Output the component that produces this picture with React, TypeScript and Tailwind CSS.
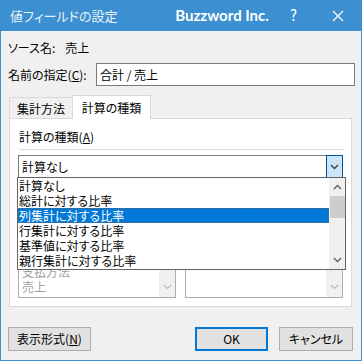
import React from 'react';

const FONT = { fontFamily: '"Noto Sans CJK JP", "Noto Sans", sans-serif', fontFeatureSettings: '"palt"' };

function ChevronDown({ color = '#606060' }: { color?: string }) {
  return (
    <svg width="9" height="6" viewBox="0 0 9 6">
      <path d="M1 1 L4.5 4.5 L8 1" fill="none" stroke={color} strokeWidth="1.4" />
    </svg>
  );
}

function ChevronUp({ color = '#606060' }: { color?: string }) {
  return (
    <svg width="9" height="6" viewBox="0 0 9 6">
      <path d="M1 5 L4.5 1.5 L8 5" fill="none" stroke={color} strokeWidth="1.4" />
    </svg>
  );
}

function Cursor() {
  return (
    <svg width="13" height="21" viewBox="0 0 13 21" className="absolute left-[221px] top-[218px]">
      <path d="M0.5 0.5 L0.5 16.5 L4.3 12.8 L6.8 19 L9.2 18 L6.8 12 L12 12 Z" fill="#fff" stroke="#000" strokeWidth="1" strokeLinejoin="round" />
    </svg>
  );
}

const OPTIONS = ['計算なし', '総計に対する比率', '列集計に対する比率', '行集計に対する比率', '基準値に対する比率', '親行集計に対する比率'];

function DisabledList({ items }: { items: string[] }) {
  return (
    <div className="relative flex-1 h-[82px] border border-[#adadad] bg-white overflow-hidden">
      <div className="flex flex-col justify-end h-full pl-[3px] pb-[3px] text-[12px] leading-[15px] text-[#a0a0a0]">
        {items.map(i => (
          <div key={i}>{i}</div>
        ))}
      </div>
      <div className="absolute right-0 top-0 bottom-0 w-[16px] bg-[#f0f0f0] flex items-end justify-center pb-[7px]">
        <ChevronDown color="#c0c0c0" />
      </div>
    </div>
  );
}

export default function App() {
  return (
    <div className="relative w-[362px] h-[361px] bg-[#f0f0f0] border-x border-b border-[#3c8fd0] text-[12px] text-black flex flex-col" style={FONT}>
      {/* title bar */}
      <div className="h-[31px] bg-[#3c8fd0] flex items-center text-white shrink-0 -mx-px">
        <span className="ml-[10px] text-[13px] text-[#eaf3fb]">値フィールドの設定</span>
        <span className="ml-auto text-[15px] font-bold" style={{ fontFamily: 'Lato, "Noto Sans", sans-serif' }}>Buzzword Inc.</span>
        <span className="ml-[21px] text-[15px]">?</span>
        <svg width="12" height="12" viewBox="0 0 12 12" className="ml-[35px] mr-[18px]">
          <path d="M1 1 L11 11 M11 1 L1 11" stroke="#fff" strokeWidth="1.2" />
        </svg>
      </div>

      <div className="flex items-center h-[16px] mt-[9px] ml-[7px]">
        <span>ソース名:</span>
        <span className="ml-[10px]">売上</span>
      </div>

      <div className="flex items-center mt-[7px] ml-[7px] mr-[6px]">
        <span>名前の指定(<span className="underline">C</span>):</span>
        <div className="ml-auto w-[259px] h-[23px] bg-white border border-[#7a7a7a] flex items-center pl-[3px]">合計 / 売上</div>
      </div>

      {/* tabs */}
      <div className="flex items-end mt-[9px] ml-[8px] h-[23px] relative z-10">
        <div className="w-[64px] h-[21px] border border-b-0 border-[#d9d9d9] bg-[#f0f0f0] flex items-center justify-center pt-[2px]">集計方法</div>
        <div className="w-[79px] h-[24px] border border-b-0 border-[#d9d9d9] bg-white -ml-px -mb-px flex items-center justify-center">計算の種類</div>
      </div>

      {/* tab panel */}
      <div className="ml-[8px] mr-[9px] h-[189px] bg-white border border-[#d9d9d9] relative px-[8px]">
        <div className="mt-[10px] h-[16px] flex items-center ml-px">計算の種類(<span className="underline">A</span>)</div>
        <div className="mt-[4px] h-px bg-[#dcdcdc] mr-[-1px] ml-px" />
        <div className="mt-[5px] h-[23px] border border-[#7a7a7a] flex items-center relative">
          <span className="pl-[3px]">計算なし</span>
          <div className="absolute right-[-1px] top-[-1px] w-[17px] h-[23px] bg-[#cce4f7] border border-[#005499] flex items-center justify-center">
            <ChevronDown color="#404040" />
          </div>
        </div>

        {/* content partly hidden behind the open list */}
        <div className="mt-[38px] flex gap-[9px]">
          <DisabledList items={['支払方法', '売上']} />
          <DisabledList items={[]} />
        </div>

        {/* dropdown list */}
        <div className="absolute left-[7px] top-[58px] w-[329px] h-[93px] bg-white border border-[#646464] z-20 flex">
          <div className="flex-1 flex flex-col text-[12px] leading-[15px]">
            {OPTIONS.map(o => (
              <div
                key={o}
                className={
                  o === '列集計に対する比率'
                    ? 'h-[15px] bg-[#0078d7] text-white outline outline-1 outline-dotted outline-[#5a6a7a] -outline-offset-1 pl-[1px]'
                    : 'h-[15px] pl-[1px]'
                }
              >
                {o}
              </div>
            ))}
          </div>
          <div className="w-[16px] bg-[#f0f0f0] flex flex-col items-center">
            <div className="h-[18px] flex items-center justify-center"><ChevronUp /></div>
            <div className="w-[15px] h-[22px] bg-[#cdcdcd]" />
            <div className="mt-auto h-[18px] flex items-center justify-center"><ChevronDown /></div>
          </div>
        </div>
      </div>

      {/* buttons */}
      <div className="flex mt-[20px] ml-[7px] mr-[8px]">
        <div className="w-[83px] h-[24px] bg-[#e1e1e1] border border-[#adadad] flex items-center justify-center">表示形式(<span className="underline">N</span>)</div>
        <div className="ml-auto w-[73px] h-[24px] bg-[#e1e1e1] border-2 border-[#0078d7] flex items-center justify-center">OK</div>
        <div className="ml-[11px] w-[74px] h-[24px] bg-[#e1e1e1] border border-[#adadad] flex items-center justify-center">キャンセル</div>
      </div>

      <Cursor />
    </div>
  );
}
